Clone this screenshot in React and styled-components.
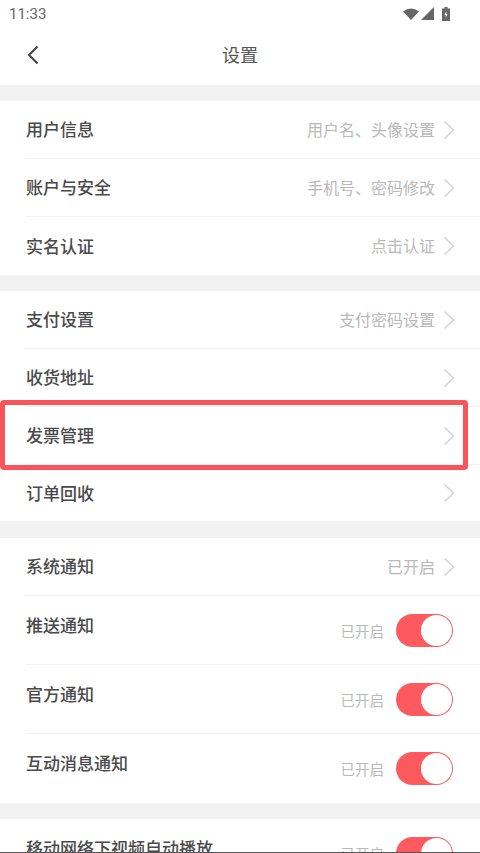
import styled, { createGlobalStyle } from "styled-components";

const GlobalStyle = createGlobalStyle`
  html, body {
    margin: 0;
    padding: 0;
    background: #fff;
  }
  body {
    font-family: "Roboto", "Noto Sans CJK SC", sans-serif;
  }
`;

const Page = styled.div`
  position: relative;
  width: 480px;
  height: 853px;
  overflow: hidden;
  background: #fff;
  border-bottom: 1px solid #555;
  box-sizing: border-box;
`;

const StatusBar = styled.div`
  height: 28px;
  display: flex;
  align-items: center;
  justify-content: space-between;
  padding: 0 30px 1px 9px;
  box-sizing: border-box;
  color: #666;
  font-size: 15px;
`;

const StatusIcons = styled.div`
  display: flex;
  align-items: center;
  gap: 2px;
`;

const Header = styled.div`
  height: 57px;
  display: flex;
  align-items: center;
  justify-content: center;
  position: relative;
  padding-bottom: 5px;
  box-sizing: border-box;
`;

const BackButton = styled.div`
  position: absolute;
  left: 26px;
  top: 17px;
  display: flex;
`;

const Title = styled.div`
  font-size: 18px;
  color: #555;
`;

const Gap = styled.div`
  height: ${(p) => p.$h || 16}px;
  background: #f2f2f2;
`;

const Row = styled.div`
  position: relative;
  height: ${(p) => p.$h || 58}px;
  margin-left: 26px;
  padding-right: 25px;
  display: flex;
  align-items: center;
  justify-content: space-between;
  box-sizing: border-box;
  border-bottom: ${(p) => (p.$last ? "none" : "1px solid #f2f2f2")};
`;

const Label = styled.div`
  font-size: 17px;
  font-weight: 500;
  color: #4a4a4a;
  align-self: ${(p) => (p.$top ? "flex-start" : "center")};
  padding-top: ${(p) => (p.$top ? "16px" : "0")};
  padding-bottom: ${(p) => (p.$top ? "0" : "2px")};
  white-space: nowrap;
`;

const Right = styled.div`
  display: flex;
  align-items: center;
  gap: 8px;
`;

const Hint = styled.span`
  font-size: 16px;
  color: #b9b9b9;
  padding-bottom: 2px;
`;

const SwitchHint = styled.span`
  font-size: 14.5px;
  color: #b9b9b9;
  margin-right: 4px;
`;

const Toggle = styled.div`
  width: 57px;
  height: 33px;
  border-radius: 17px;
  background: #fc5a5f;
  display: flex;
  justify-content: flex-end;
  padding: 1px;
  box-sizing: border-box;
  margin-right: 2px;
`;

const Knob = styled.div`
  width: 31px;
  height: 31px;
  border-radius: 50%;
  background: #fff;
`;

const Highlight = styled.div`
  position: absolute;
  left: -26px;
  top: -7px;
  width: 468px;
  height: 70px;
  border: 5px solid #f8555a;
  border-radius: 4px;
  box-sizing: border-box;
  pointer-events: none;
`;

const Chevron = () => (
  <svg width="12" height="20" viewBox="0 0 12 20" fill="none">
    <path d="M1.5 1.5 L10.5 10 L1.5 18.5" stroke="#d4d4d4" strokeWidth="1.6" />
  </svg>
);

const LinkRow = ({ label, hint, h, last, children }) => (
  <Row $h={h} $last={last}>
    <Label>{label}</Label>
    <Right>
      {hint && <Hint>{hint}</Hint>}
      <Chevron />
    </Right>
    {children}
  </Row>
);

const SwitchRow = ({ label, h, last }) => (
  <Row $h={h} $last={last}>
    <Label $top>{label}</Label>
    <Right>
      <SwitchHint>已开启</SwitchHint>
      <Toggle>
        <Knob />
      </Toggle>
    </Right>
  </Row>
);

const App = () => {
  return (
    <Page>
      <GlobalStyle />
      <StatusBar>
        <span>11:33</span>
        <StatusIcons>
          <svg width="16" height="12" viewBox="0 0 16 12">
            <path d="M0 3.5 Q8 -2.5 16 3.5 L8 12 Z" fill="#666" />
          </svg>
          <svg width="13" height="13" viewBox="0 0 13 13">
            <path d="M0 13 L13 0 L13 13 Z" fill="#666" />
          </svg>
          <svg width="8" height="14" viewBox="0 0 8 14" style={{ marginLeft: 6 }}>
            <path d="M2.5 0 H5.5 V1.5 H8 V14 H0 V1.5 H2.5 Z" fill="#666" />
            <path d="M4.5 4 L2.4 8 H3.8 L3.5 11 L5.6 7 H4.2 Z" fill="#fff" />
          </svg>
        </StatusIcons>
      </StatusBar>
      <Header>
        <BackButton>
          <svg width="14" height="20" viewBox="0 0 14 20" fill="none">
            <path d="M11.5 1.5 L3 10 L11.5 18.5" stroke="#444" strokeWidth="2" />
          </svg>
        </BackButton>
        <Title>设置</Title>
      </Header>
      <Gap />
      <LinkRow label="用户信息" hint="用户名、头像设置" />
      <LinkRow label="账户与安全" hint="手机号、密码修改" />
      <LinkRow label="实名认证" hint="点击认证" last />
      <Gap />
      <LinkRow label="支付设置" hint="支付密码设置" />
      <LinkRow label="收货地址" />
      <LinkRow label="发票管理">
        <Highlight />
      </LinkRow>
      <LinkRow label="订单回收" h={56} last />
      <Gap $h={17} />
      <LinkRow label="系统通知" hint="已开启" />
      <SwitchRow label="推送通知" h={69} />
      <SwitchRow label="官方通知" h={69} />
      <SwitchRow label="互动消息通知" h={69} last />
      <Gap />
      <SwitchRow label="移动网络下视频自动播放" h={69} last />
    </Page>
  );
};

export default App;
